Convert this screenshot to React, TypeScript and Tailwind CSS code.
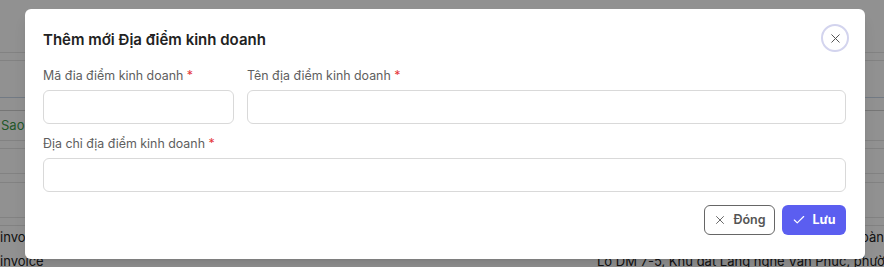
import { X, Check } from "lucide-react";

function Field({ label }: { label: string }) {
  return (
    <div className="flex flex-col">
      <label className="text-[12.4px] leading-[18px] text-[#5e5e5e] mb-[5px]">
        {label} <span className="text-[#e5383b]">*</span>
      </label>
      <input className="h-[34px] w-full rounded-md border border-[#d9d9d9] bg-white outline-none" />
    </div>
  );
}

export default function App() {
  return (
    <div className="relative w-[884px] h-[267px] overflow-hidden bg-white font-['Inter','Noto_Sans',sans-serif]">
      {/* page behind the dialog */}
      <div className="flex flex-col text-[13px] text-[#222]">
        <div className="h-[53px] border-b border-[#e5e5e5]" />
        <div className="h-[8px] border-b border-[#e5e5e5]" />
        <div className="h-[37px] border-b border-[#c9d6e8]" />
        <div className="h-[13px] border-b border-[#d0d0d0]" />
        <div className="h-[30px] border-b border-[#e5e5e5] flex items-center">
          <span className="text-[#3c9b4a] ml-[1px]">Sao</span>
        </div>
        <div className="h-[8px] border-b border-[#e5e5e5]" />
        <div className="h-[25px] border-b border-[#e5e5e5]" />
        <div className="h-[9px] border-b border-[#e5e5e5]" />
        <div className="h-[35px] border-b border-[#e5e5e5]" />
        <div className="h-[8px] border-b border-[#e5e5e5]" />
        <div className="h-[24px] flex items-center justify-between">
          <span>invoi</span>
          <span>oàn</span>
        </div>
        <div className="h-[24px] flex items-center relative">
          <span>invoice</span>
          <span className="absolute left-[597px] whitespace-nowrap">
            Lô DM 7-5, Khu đất Làng nghề Vạn Phúc, phường Hà Đông
          </span>
        </div>
      </div>

      {/* overlay */}
      <div className="absolute inset-0 bg-black/[0.43]" />

      {/* dialog */}
      <div className="absolute left-[25px] top-[9px] w-[840px] rounded-md bg-white shadow-lg flex flex-col pb-[24px]">
        <div className="flex items-center justify-between pl-[18px] pr-[16px] pt-[15px]">
          <h2 className="pt-[4px] text-[15px] leading-[22px] font-semibold text-[#222]">
            Thêm mới Địa điểm kinh doanh
          </h2>
          <button className="w-[28px] h-[28px] rounded-full border-2 border-[#d3d4ee] flex items-center justify-center text-[#555]">
            <X size={15} strokeWidth={1.6} />
          </button>
        </div>

        <div className="pl-[18px] pr-[19px] mt-[15px] flex flex-col gap-[11px]">
          <div className="grid grid-cols-[191px_1fr] gap-[13px]">
            <Field label="Mã đia điểm kinh doanh" />
            <Field label="Tên địa điểm kinh doanh" />
          </div>
          <Field label="Địa chỉ địa điểm kinh doanh" />
        </div>

        <div className="pr-[19px] mt-[13px] flex justify-end gap-[7px]">
          <button className="h-[30px] w-[71px] rounded-md border border-[#666] flex items-center justify-center gap-[6px] text-[12.5px] font-semibold text-[#555]">
            <X size={14} strokeWidth={1.5} />
            Đóng
          </button>
          <button className="h-[30px] w-[64px] rounded-md bg-[#5b5ef0] flex items-center justify-center gap-[6px] text-[12.5px] font-bold text-white">
            <Check size={14} strokeWidth={2} />
            Lưu
          </button>
        </div>
      </div>
    </div>
  );
}
